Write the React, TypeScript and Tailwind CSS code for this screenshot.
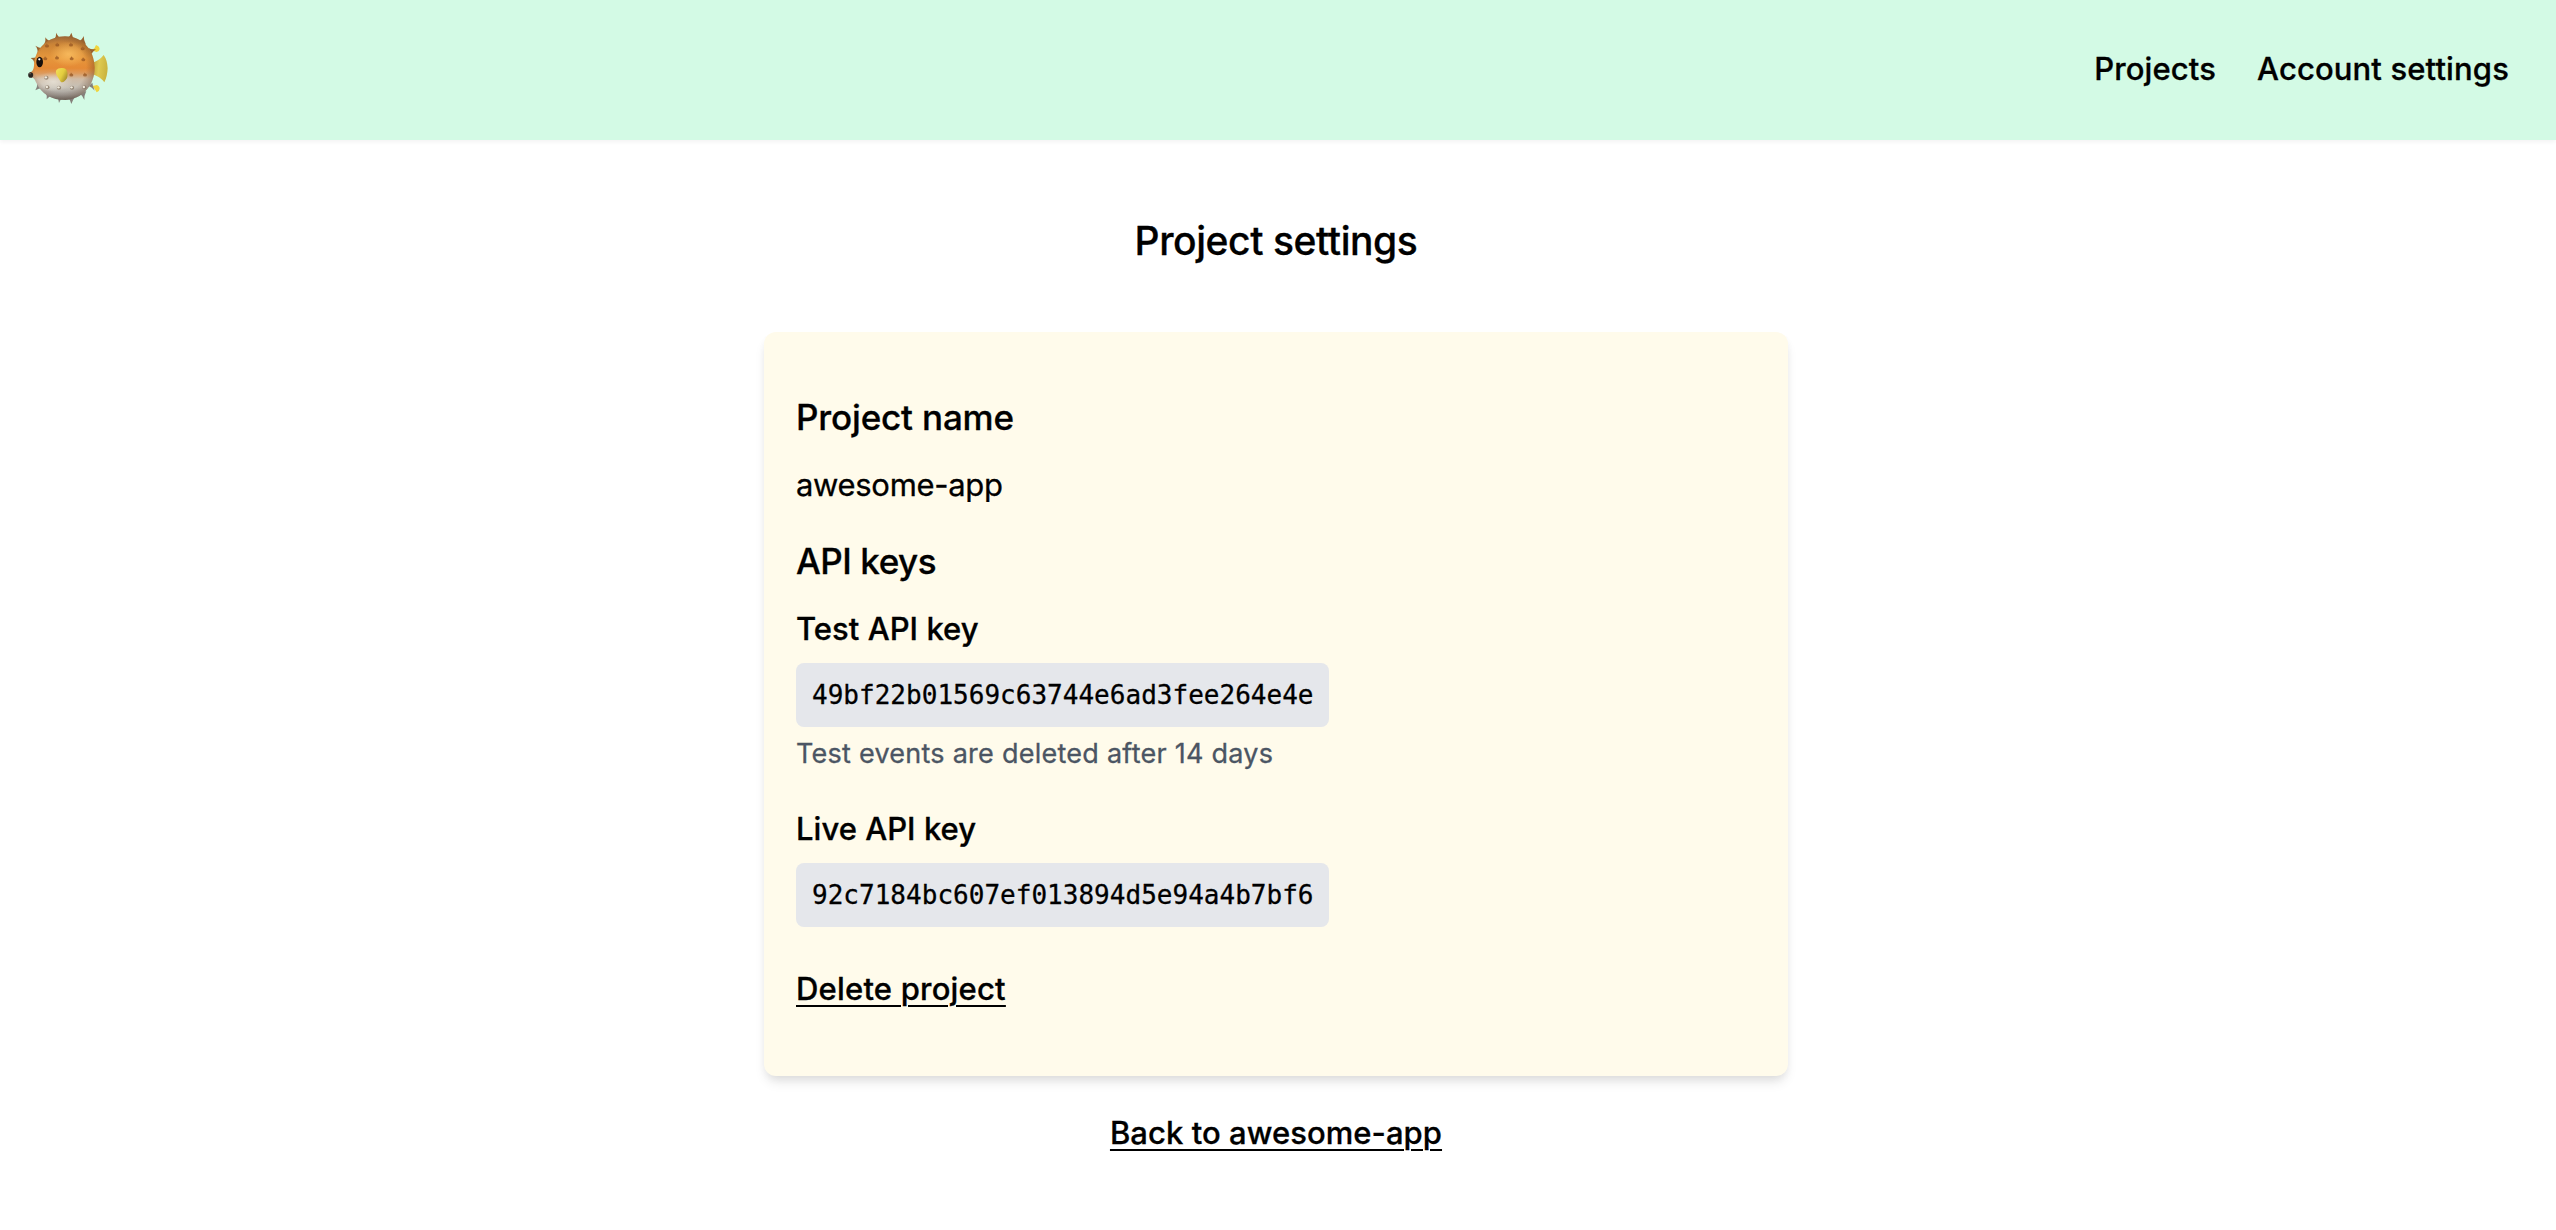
const bodyPath =
  "M195 109 C245 109 283 148 284 202 C285 257 245 299 196 300 C155 300 123 280 109 248 C104 237 101 232 90 231 Q84 224 90 217 C99 214 101 206 102 197 C104 145 145 109 195 109 Z";
const topSpikes: string[] = [
  "M161 120 Q169 112 169 98 Q173 110 187 118 Z",
  "M199 118 Q211 110 214 98 Q217 112 226 122 Z",
  "M234 126 Q248 118 251 108 Q251 122 258 134 Z",
  "M132 135 Q138 124 136 112 Q142 122 155 124 Z",
  "M113 160 Q114 146 106 137 Q116 143 128 145 Z",
  "M104 190 Q101 178 92 174 Q102 174 111 172 Z",
  "M264 143 Q276 150 288 147 Q278 155 275 162 Z",
];
const bottomSpikes: string[] = [
  "M112 248 Q112 262 106 271 Q116 265 128 264 Z",
  "M136 275 Q142 287 140 298 Q147 289 159 285 Z",
  "M169 289 Q178 298 177 309 Q182 297 194 292 Z",
  "M203 292 Q212 300 214 312 Q218 300 227 288 Z",
  "M238 280 Q250 289 253 300 Q252 287 259 273 Z",
  "M266 258 Q276 262 284 272 Q278 258 277 248 Z",
];
const brownDots: [number, number][] = [
  [141, 137], [172, 134], [213, 134], [248, 145], [136, 175], [171, 173],
  [215, 175], [250, 178], [214, 224], [255, 224],
];
const paleDots: [number, number][] = [
  [138, 232], [141, 261], [176, 262], [215, 262], [252, 261],
];

function Pufferfish() {
  return (
    <svg className="h-[72px] w-[80px]" viewBox="84 96 240 216" role="img" aria-label="Home">
      <defs>
        <linearGradient id="skin" x1="0" y1="0" x2="0" y2="1">
          <stop offset="0" stopColor="#b0743c" />
          <stop offset="0.14" stopColor="#cd8536" />
          <stop offset="0.34" stopColor="#e6973c" />
          <stop offset="0.5" stopColor="#e58a35" />
          <stop offset="0.58" stopColor="#dd9a5c" />
          <stop offset="0.67" stopColor="#cfbba6" />
          <stop offset="0.8" stopColor="#c6c0b6" />
          <stop offset="0.92" stopColor="#a29e99" />
          <stop offset="1" stopColor="#787572" />
        </linearGradient>
        <radialGradient id="shade" cx="0.48" cy="0.48" r="0.54">
          <stop offset="0.72" stopColor="#50301a" stopOpacity="0" />
          <stop offset="1" stopColor="#50301a" stopOpacity="0.35" />
        </radialGradient>
        <radialGradient id="glow" cx="0.5" cy="0.5" r="0.5">
          <stop offset="0" stopColor="#ffc566" stopOpacity="0.75" />
          <stop offset="1" stopColor="#ffc566" stopOpacity="0" />
        </radialGradient>
        <radialGradient id="belly" cx="0.5" cy="0.5" r="0.5">
          <stop offset="0" stopColor="#ece8de" stopOpacity="0.75" />
          <stop offset="1" stopColor="#ece8de" stopOpacity="0" />
        </radialGradient>
        <linearGradient id="tail" x1="0" y1="0" x2="1" y2="0.2">
          <stop offset="0" stopColor="#b99a35" />
          <stop offset="0.5" stopColor="#dfca50" />
          <stop offset="1" stopColor="#cbb440" />
        </linearGradient>
        <linearGradient id="fin" x1="0" y1="0" x2="1" y2="0.6">
          <stop offset="0" stopColor="#f4e05a" />
          <stop offset="0.6" stopColor="#e3cd3e" />
          <stop offset="1" stopColor="#a98f2c" />
        </linearGradient>
      </defs>
      <path d="M276 188 Q298 182 311 165 Q322 180 323 205 Q322 230 313 247 Q300 229 276 222 Z" fill="url(#tail)" />
      <path d="M276 150 Q286 144 288 135 Q298 138 299 147 Q298 155 290 156 Q283 153 276 152 Z" fill="#f0d43e" />
      <path d="M276 257 Q284 258 290 255 Q299 258 299 266 Q298 275 290 277 Q284 265 276 259 Z" fill="#f0d43e" />
      {topSpikes.map((d) => <path key={d} d={d} fill="#99622f" />)}
      {bottomSpikes.map((d) => <path key={d} d={d} fill="#85807b" />)}
      <path d={bodyPath} fill="url(#skin)" />
      <ellipse cx="206" cy="162" rx="56" ry="38" fill="url(#glow)" />
      <ellipse cx="160" cy="245" rx="58" ry="30" fill="url(#belly)" />
      <path d={bodyPath} fill="url(#shade)" />
      {brownDots.map(([x, y]) => (
        <g key={`${x}-${y}`}>
          <ellipse cx={x} cy={y + 1} rx="6" ry="4.5" fill="#8a4b1c" fillOpacity="0.65" />
          <path d={`M${x - 3} ${y + 1} L${x - 1} ${y - 7} L${x + 3} ${y + 1} Z`} fill="#a8662c" />
        </g>
      ))}
      {paleDots.map(([x, y]) => (
        <g key={`${x}-${y}`}>
          <ellipse cx={x + 1} cy={y + 1} rx="6.5" ry="6" fill="#857461" fillOpacity="0.75" />
          <circle cx={x - 0.5} cy={y} r="3.6" fill="#efe9dc" />
        </g>
      ))}
      <path d="M169 210 Q175 203 187 204 Q199 204 202 216 Q205 231 197 240 Q188 251 182 245 Q176 236 170 226 Q165 216 169 210 Z" fill="url(#fin)" />
      <ellipse cx="119" cy="186" rx="10" ry="16" fill="#17100c" />
      <circle cx="118" cy="178" r="3.4" fill="#fff" />
      <ellipse cx="92" cy="225" rx="7.5" ry="8.5" fill="#29231f" />
      <circle cx="90" cy="221" r="2" fill="#8b8682" />
    </svg>
  );
}

function ApiKey({ value }: { value: string }) {
  return (
    <code className="block h-16 w-[533px] rounded-lg bg-[#e5e7eb] px-4 font-['DejaVu_Sans_Mono',monospace] text-[26px] leading-[64px] tracking-[0.02px] whitespace-nowrap">
      {value}
    </code>
  );
}

export default function App() {
  return (
    <div className="min-h-screen bg-white font-['Inter',sans-serif] text-[31px] leading-[48px] text-black [-webkit-text-stroke:0.3px]">
      <header className="flex h-[140px] items-center justify-between bg-[#d3fae5] pr-[47px] pl-7 shadow-[0_2px_4px_rgba(0,0,0,0.05)]">
        <a className="-mt-1"><Pufferfish /></a>
        <nav className="-mt-0.5 flex gap-[41px] font-medium">
          <a className="tracking-[0.12px]">Projects</a>
          <a className="tracking-[0.13px]">Account settings</a>
        </nav>
      </header>
      <main className="mr-1 flex flex-col items-center">
        <h1 className="mt-[73px] text-[39px] leading-[56px] font-medium tracking-[-0.43px]">Project settings</h1>
        <section className="mt-[63px] flex h-[744px] w-[1024px] flex-col items-start rounded-xl bg-[#fffbeb] px-8 pt-[57px] shadow-[0_8px_12px_-2px_rgba(0,0,0,0.1),0_4px_8px_-2px_rgba(0,0,0,0.06)]">
          <h2 className="text-[35px] leading-[56px] font-medium tracking-[-0.16px]">Project name</h2>
          <p className="mt-4 tracking-[-0.32px]">awesome-app</p>
          <h2 className="mt-6 text-[35px] leading-[56px] font-medium tracking-[-0.45px]">API keys</h2>
          <h3 className="mt-4 font-medium tracking-[0.03px]">Test API key</h3>
          <div className="mt-[10px]"><ApiKey value="49bf22b01569c63744e6ad3fee264e4e" /></div>
          <p className="mt-[7px] text-[27px] leading-10 tracking-[0.25px] text-[#4b5563]">Test events are deleted after 14 days</p>
          <h3 className="mt-[31px] font-medium tracking-[0.03px]">Live API key</h3>
          <div className="mt-[10px]"><ApiKey value="92c7184bc607ef013894d5e94a4b7bf6" /></div>
          <a className="mt-[38px] font-medium tracking-[0.2px] underline decoration-2 underline-offset-[5px]">Delete project</a>
        </section>
        <a className="mt-[33px] font-medium tracking-[0.05px] underline decoration-2 underline-offset-[5px]">Back to awesome-app</a>
      </main>
    </div>
  );
}
